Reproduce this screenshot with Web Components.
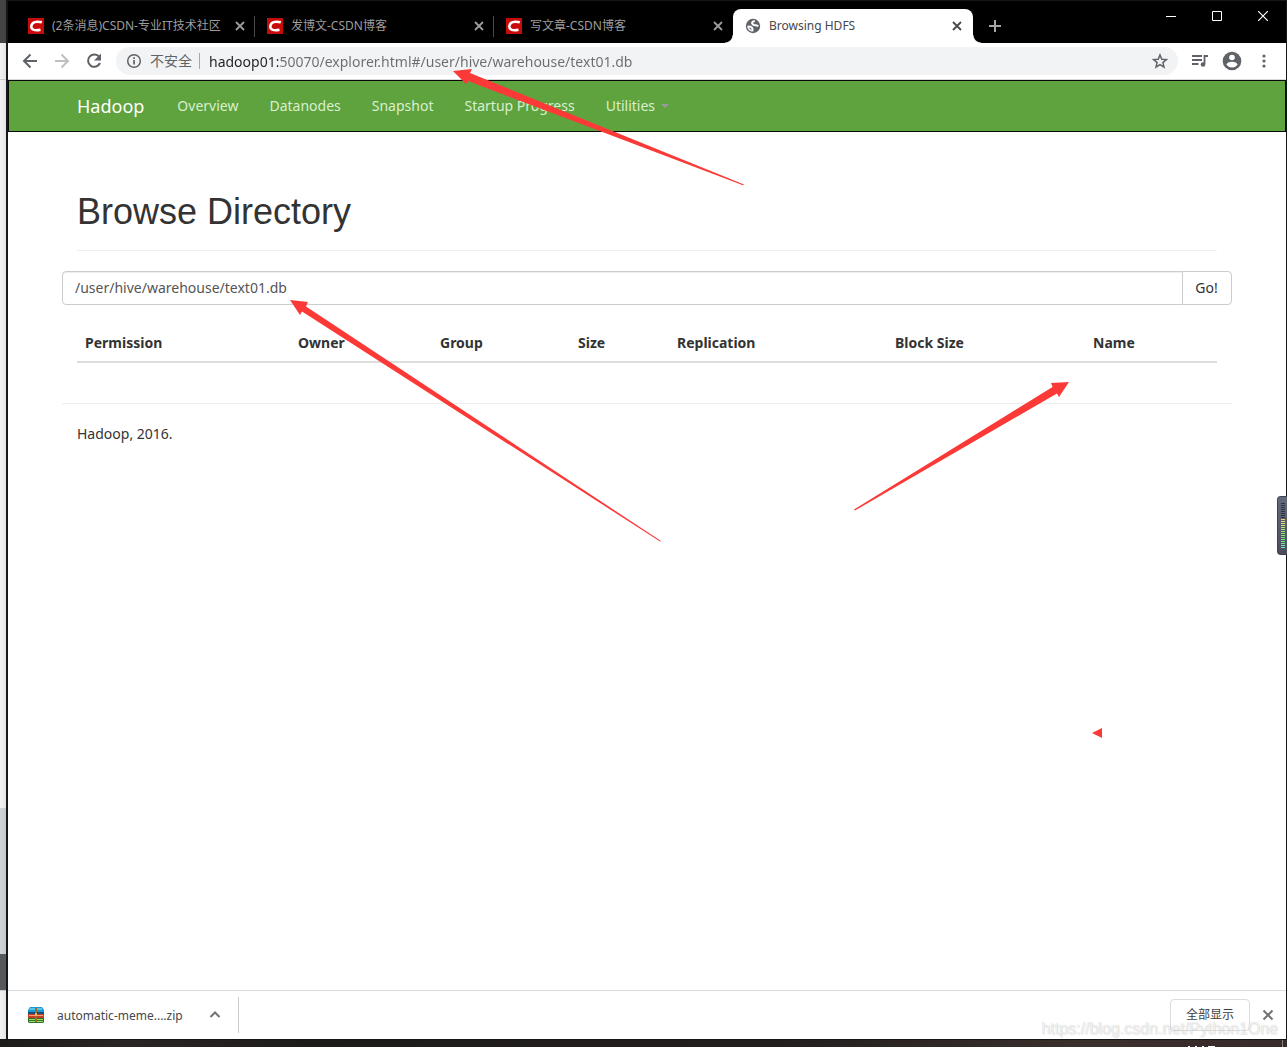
<!DOCTYPE html>
<html lang="zh-CN">
<head>
<meta charset="utf-8">
<title>Browsing HDFS</title>
<style>
  html, body { margin: 0; }
  body {
    --ui: "Noto Sans", "Noto Sans CJK SC", sans-serif;
    --grey: #5f6368;
    font: 14px/20px var(--ui);
    color: #333;
    background: #fff;
    position: relative;
  }
</style>
</head>
<body>
<desktop-frame>
  <browser-window>
    <tab-strip slot="tabs">
      <browser-tab icon="csdn">(2条消息)CSDN-专业IT技术社区</browser-tab>
      <browser-tab icon="csdn">发博文-CSDN博客</browser-tab>
      <browser-tab icon="csdn" last>写文章-CSDN博客</browser-tab>
      <browser-tab icon="globe" active>Browsing HDFS</browser-tab>
    </tab-strip>
    <browser-toolbar slot="toolbar"></browser-toolbar>
    <hadoop-nav>
      <nav-link>Overview</nav-link>
      <nav-link>Datanodes</nav-link>
      <nav-link>Snapshot</nav-link>
      <nav-link>Startup Progress</nav-link>
      <nav-link menu>Utilities</nav-link>
    </hadoop-nav>
    <directory-browser></directory-browser>
    <download-shelf slot="shelf"></download-shelf>
  </browser-window>
</desktop-frame>
<level-meter></level-meter>
<arrow-marks></arrow-marks>
<water-mark>https://blog.csdn.net/Python1One</water-mark>

<script>
const define = (name, html) => customElements.define(name, class extends HTMLElement {
  constructor() {
    super();
    this.attachShadow({ mode: 'open' }).innerHTML =
      '<style>:host,*{box-sizing:border-box}button{font:inherit;color:inherit;border:0;background:none;padding:0}svg{display:block;flex:none}</style>' + html;
  }
});

/* The desktop: a sliver of the window behind, and the taskbar edge */
define('desktop-frame', `
<style>
  :host { display: flex; flex-direction: column; min-height: 100vh; }
  .row { flex: 1; display: flex; }
  .behind { width: 6px; display: flex; flex-direction: column; background: linear-gradient(90deg, #f2f2f2, #e4e4e4); }
  .dark { height: 43px; background: #444; }
  .bar { height: 37px; border-bottom: 1px solid #ccc; }
  .fill { flex: 1; }
  .pane { height: 146px; background: linear-gradient(90deg, #d0d5d8, #c4c9cc); }
  .foot { height: 36px; background: #57585a; }
  .end { height: 49px; border-top: 1px solid #ccc; }
  .task { height: 8px; display: flex; justify-content: flex-end; background: linear-gradient(90deg, #1d1b1a, #2a2524 10%, #1d1b1a 24%, #221e1d 60%, #3a302c 85%, #38292a); border-top: 1px solid #151515; }
</style>
<div class="row">
  <div class="behind"><div class="dark"></div><div class="bar"></div><div class="fill"></div><div class="pane"></div><div class="foot"></div><div class="end"></div></div>
  <slot></slot>
</div>
<div class="task"><svg width="107" height="7" viewBox="0 0 107 7"><path d="M8 6h2v1H8zM15 6h2v1h-2zM22 6h2v1h-2zM28 6h2v1h-2zM30 6h5v1h-5z" fill="#fff"/><path d="M102.500 0v7" stroke="#8a8380"/></svg></div>`);

define('browser-window', `
<style>
  :host { flex: 1; min-width: 0; display: flex; flex-direction: column; background: #fff;
    border: solid #14171a; border-width: 1px 1px 0 2px; }
  main { flex: 1; }
</style>
<slot name="tabs"></slot><slot name="toolbar"></slot><main><slot></slot></main><slot name="shelf"></slot>`);

define('tab-strip', `
<style>
  :host { display: flex; background: #000; height: 42px; padding: 8px 0 0 8px; }
  .new { width: 44px; display: grid; place-items: center; }
  .controls { margin: -8px 0 0 auto; display: flex; height: 29px; }
  .controls button { width: 46px; display: grid; place-items: center; }
</style>
<slot></slot>
<button class="new" aria-label="New tab"><svg width="12" height="12"><path d="M6 0v12M0 6h12" stroke="#a5a5a5" stroke-width="2"/></svg></button>
<div class="controls">
  <button aria-label="Minimize"><svg width="10" height="10"><path d="M0 5.500h10" stroke="#fff"/></svg></button>
  <button aria-label="Maximize"><svg width="10" height="10"><path d="M.5 .5h9v9h-9z" fill="none" stroke="#fff"/></svg></button>
  <button aria-label="Close"><svg width="10" height="10"><path d="M0 0l10 10M10 0L0 10" stroke="#fff" stroke-width="1.200"/></svg></button>
</div>`);

const ICONS = {
  csdn: '<svg width="16" height="16"><path fill="#c80a0a" d="M0 0h16v16H0z"/><path d="M13.800 4.300C8.500 2.900 3.600 4 3.300 8.300c-.2 3.800 4 4.500 9.200 3.400" fill="none" stroke="#fff" stroke-width="2.500"/></svg>',
  globe: '<svg width="16" height="16" viewBox="0 0 16 16"><circle cx="8" cy="8" r="7.200" fill="#5f6368"/><path d="M9.800 3C6.800 3.500 6.300 5 8 6.400 9.500 7.700 11.500 7 13.300 8.200M2.600 8.600L5.500 8.800C7.300 9.300 7.800 11 7.300 13.400" fill="none" stroke="#fff" stroke-width="2"/><path d="M2.300 8l5 5.500C4.500 13.200 2.200 11 2.300 8z" fill="#fff"/></svg>'
};
customElements.define('browser-tab', class extends HTMLElement {
  constructor() {
    super();
    this.attachShadow({ mode: 'open' }).innerHTML = `
<style>
  :host { display: flex; align-items: center; position: relative; width: 239px; height: 34px; padding: 0 9px 0 12px;
    box-sizing: border-box; font-size: 12px; line-height: 16px; color: #9d9d9d; border-right: 1px solid transparent;
    border-image: linear-gradient(#000 8px, #4c4c4c 8px, #4c4c4c 27px, #000 27px) 1; border-width: 0 1px 0 0; }
  :host([last]) { border-image: none; }
  :host([active]) { border: 0; background: #fff; color: #45484c; border-radius: 8px 8px 0 0; width: 240px; padding-right: 11px; }
  :host([active])::before, :host([active])::after { content: ""; position: absolute; bottom: 0; width: 8px; height: 8px; }
  :host([active])::before { right: 100%; background: radial-gradient(circle at 0 0, #000 7px, #fff 8px); }
  :host([active])::after { left: 100%; background: radial-gradient(circle at 100% 0, #000 7px, #fff 8px); }
  svg { display: block; flex: none; }
  .title { flex: 1; min-width: 0; margin-left: 8px; white-space: nowrap; overflow: hidden; }
  button { border: 0; padding: 0; background: none; color: inherit; }
</style>
${ICONS[this.getAttribute('icon')]}
<span class="title"><slot></slot></span>
<button aria-label="Close tab"><svg width="10" height="10"><path d="M1 1l8 8M9 1L1 9" stroke="currentColor" stroke-width="1.800"/></svg></button>`;
  }
});

define('browser-toolbar', `
<style>
  :host { display: flex; align-items: center; height: 37px; padding: 0 12px 0 12px; border-bottom: 1px solid #d9dadc; color: var(--grey); }
  .go { display: flex; gap: 12px; margin-right: 12px; }
  .box { flex: 1; height: 28px; border-radius: 14px; background: #f1f3f4; display: flex; align-items: center; padding: 0 8px; }
  .sep { width: 1px; height: 16px; background: #a5a8ab; margin: 0 9px 0 7px; }
  label { margin-left: 6px; white-space: nowrap; }
  input { flex: 1; min-width: 0; border: 0; outline: 0; padding: 0; height: 24px; font: inherit;
    background: linear-gradient(90deg, #202124 69px, #6a6d71 69px); -webkit-background-clip: text; background-clip: text; color: transparent; }
  .end { display: flex; gap: 12px; margin-left: 12px; align-items: center; }
</style>
<div class="go">
  <button aria-label="Back"><svg width="20" height="20" viewBox="0 0 20 20" fill="none" stroke="currentColor" stroke-width="2"><path d="M17 10H4M10.500 3.500L4 10l6.500 6.500"/></svg></button>
  <button aria-label="Forward"><svg width="20" height="20" viewBox="0 0 20 20" fill="none" stroke="#bdbfc1" stroke-width="2"><path d="M3 10h13M9.500 3.500L16 10l-6.500 6.500"/></svg></button>
  <button aria-label="Reload"><svg width="20" height="20" viewBox="0 0 20 20"><path d="M15.300 6A6.200 6.200 0 1 0 16 12" fill="none" stroke="currentColor" stroke-width="2"/><path d="M17 2.500v7h-7z" fill="currentColor"/></svg></button>
</div>
<div class="box">
  <svg width="20" height="20" viewBox="0 0 20 20"><circle cx="10" cy="10" r="6.300" fill="none" stroke="currentColor" stroke-width="1.500"/><path d="M9.200 9h1.700v4.500H9.200zM9.200 6.300h1.700V8H9.200z" fill="currentColor"/></svg>
  <label for="url">不安全</label><span class="sep"></span>
  <input id="url" value="hadoop01:50070/explorer.html#/user/hive/warehouse/text01.db">
  <button aria-label="Bookmark"><svg width="20" height="20" viewBox="0 0 20 20"><path d="M10 4l1.800 4.200 4.600.4-3.500 3 1.100 4.500-4-2.400-4 2.400 1.100-4.500-3.500-3 4.600-.4z" fill="none" stroke="currentColor" stroke-width="1.500"/></svg></button>
</div>
<div class="end">
  <button aria-label="Media"><svg width="20" height="20" viewBox="0 0 20 20" fill="none" stroke="currentColor"><path d="M2 5h10M2 9h10M2 13h6.500" stroke-width="1.800"/><path d="M14.500 13V5H18" stroke-width="1.800"/><circle cx="13" cy="13.500" r="2.300" fill="currentColor" stroke="none"/></svg></button>
  <button aria-label="Profile"><svg width="20" height="20" viewBox="0 0 20 20"><circle cx="10" cy="10" r="9.300" fill="currentColor"/><circle cx="10" cy="6.500" r="2.800" fill="#fff"/><path d="M4.400 13.500c.7-2 3.700-2.700 5.600-2.700s4.900.7 5.600 2.700c-1.300 1.900-3.300 3-5.600 3s-4.300-1.100-5.600-3z" fill="#fff"/></svg></button>
  <button aria-label="Menu"><svg width="20" height="20" viewBox="0 0 20 20" fill="currentColor"><circle cx="10" cy="5" r="1.600"/><circle cx="10" cy="10" r="1.600"/><circle cx="10" cy="15" r="1.600"/></svg></button>
</div>`);

define('hadoop-nav', `
<style>
  :host { display: block; background: #5fa33e; border: 1px solid #080808; }
  nav { max-width: 1170px; margin: 0 auto; height: 50px; display: flex; align-items: center; gap: 1px; }
  .brand { padding: 0 17px 0 15px; font-size: 18px; color: #fff; text-decoration: none; }
</style>
<nav><a class="brand" href="#">Hadoop</a><slot></slot></nav>`);

customElements.define('nav-link', class extends HTMLElement {
  constructor() {
    super();
    this.attachShadow({ mode: 'open' }).innerHTML = `
<style>
  a { display: flex; align-items: center; padding: 15px; color: #d9efcf; text-decoration: none; white-space: nowrap; }
  i { margin-left: 6px; border: 4px solid transparent; border-top-color: #999; border-bottom: 0; }
</style><a href="#"><slot></slot>${this.hasAttribute('menu') ? '<i></i>' : ''}</a>`;
  }
});

define('directory-browser', `
<style>
  :host { display: block; max-width: 1170px; margin: 60px auto 0; }
  h1 { margin: 0 15px 20px; padding-bottom: 18px; border-bottom: 1px solid #eee; font: 400 36px/40px "Liberation Sans", Arial, sans-serif; }
  form { display: flex; height: 34px; margin-bottom: 20px; }
  input { flex: 1; min-width: 0; border: 1px solid #ccc; border-radius: 4px 0 0 4px; padding: 0 12px; font: inherit; color: #555;
    box-shadow: inset 0 1px 1px rgba(0,0,0,.075); }
  form button { border: 1px solid #ccc; border-radius: 0 4px 4px 0; margin-left: -1px; padding: 0 13px 0 12px; min-width: 50px; background: #fff; }
  .wrap { padding: 0 15px; }
  table { width: 100%; table-layout: fixed; border-collapse: separate; border-spacing: 0; }
  th { padding: 8px; text-align: left; font-weight: 700; border-bottom: 2px solid #ddd; white-space: nowrap; }
  hr { border: 0; border-top: 1px solid #eee; margin: 40px 0 20px; }
  p { margin: 0 15px; }
</style>
<h1>Browse Directory</h1>
<form><input aria-label="Directory" value="/user/hive/warehouse/text01.db"><button type="button">Go!</button></form>
<div class="wrap"><table>
  <colgroup><col style="width:213px"><col style="width:142px"><col style="width:138px"><col style="width:99px"><col style="width:218px"><col style="width:198px"><col style="width:132px"></colgroup>
  <thead><tr><th>Permission</th><th>Owner</th><th>Group</th><th>Size</th><th>Replication</th><th>Block Size</th><th>Name</th></tr></thead>
</table></div>
<hr>
<p>Hadoop, 2016.</p>`);

define('download-shelf', `
<style>
  :host { display: flex; align-items: center; height: 49px; border-top: 1px solid #d9dadc; padding: 0 12px 0 20px; font-size: 12px; line-height: 16px; }
  .item { display: flex; align-items: center; height: 36px; width: 211px; border-right: 1px solid #ccc; color: #45484c; }
  .name { flex: 1; margin-left: 13px; padding-top: 2px; text-align: left; }
  .item svg:last-child { margin-right: 17px; }
  .all { margin-left: auto; width: 80px; height: 32px; border: 1px solid #dadce0; border-radius: 4px; margin-right: 12px; color: #3c4043; }
</style>
<button class="item">
  <svg width="16" height="16"><path fill="#1c98d0" d="M2 0h12l2 3v3H0V3z"/><path fill="#52c4ee" d="M2 1h12v2H1z"/><path fill="#174f7c" d="M0 5h16v2H0z"/><path fill="#c83e25" d="M0 7h16v4H0z"/><path fill="#f0a071" d="M1 8h14v1H1z"/><path fill="#29702b" d="M0 11h16v4l-1 1H1l-1-1z"/><path fill="#9ee25d" d="M1 12h14v1H1zM1 14h14v1H1z"/><path fill="#a06a24" d="M7 1h2v14H7z"/><path fill="#e0b763" d="M7 6h2v3H7z"/></svg>
  <span class="name">automatic-meme....zip</span>
  <svg width="12" height="12"><path d="M1.500 8L6 3.500 10.500 8" fill="none" stroke="#6f7276" stroke-width="2"/></svg>
</button>
<button class="all">全部显示</button>
<button aria-label="Close shelf"><svg width="12" height="12"><path d="M1.500 1.500l9 9M10.500 1.500l-9 9" stroke="#6f7276" stroke-width="2"/></svg></button>`);

/* Volume meter docked on the screen edge */
define('level-meter', `
<style>
  :host { position: absolute; right: 0; top: 496px; width: 10px; height: 59px; border: 1px solid #3d4152; border-right: 0;
    border-radius: 4px 0 0 4px; background: linear-gradient(#646a7c, #4a4e5c); padding: 6px 2px 0 3px; }
  i { display: block; height: 1px; margin-bottom: 1px; background: #30343f; }
</style>${Array.from({ length: 23 }, (_, n) => `<i style="${n > 7 ? `background:hsl(${50 + (n - 8) * 8} 70% 68%)` : ''}"></i>`).join('')}`);

/* Red annotation arrows drawn over the page */
define('arrow-marks', `
<style>:host { position: absolute; left: 0; top: 0; pointer-events: none; }</style>
<svg width="1110" height="745" fill="#fb3a38">
  <path d="M453 71L472 69 470 73 744 184.500 743 185.200 468 81 466 84z"/>
  <path d="M290 300L308 302 306 306.500 661 541 660 541.500 302 311.500 300 315z"/>
  <path d="M1069 382L1051 383 1052.500 387 854 509.500 855 510.500 1057 393.500 1059 397z"/>
  <path d="M1092 733l10-5v10z"/>
</svg>`);

define('water-mark', `
<style>:host { position: absolute; right: 9px; bottom: 8px; font: 16px/20px "Liberation Sans", Arial, sans-serif; color: rgba(255,255,255,.7);
  text-shadow: 0 0 1px rgba(0,0,0,.2), 1px 1px 1px rgba(0,0,0,.08); pointer-events: none; }</style><slot></slot>`);
</script>
</body>
</html>
